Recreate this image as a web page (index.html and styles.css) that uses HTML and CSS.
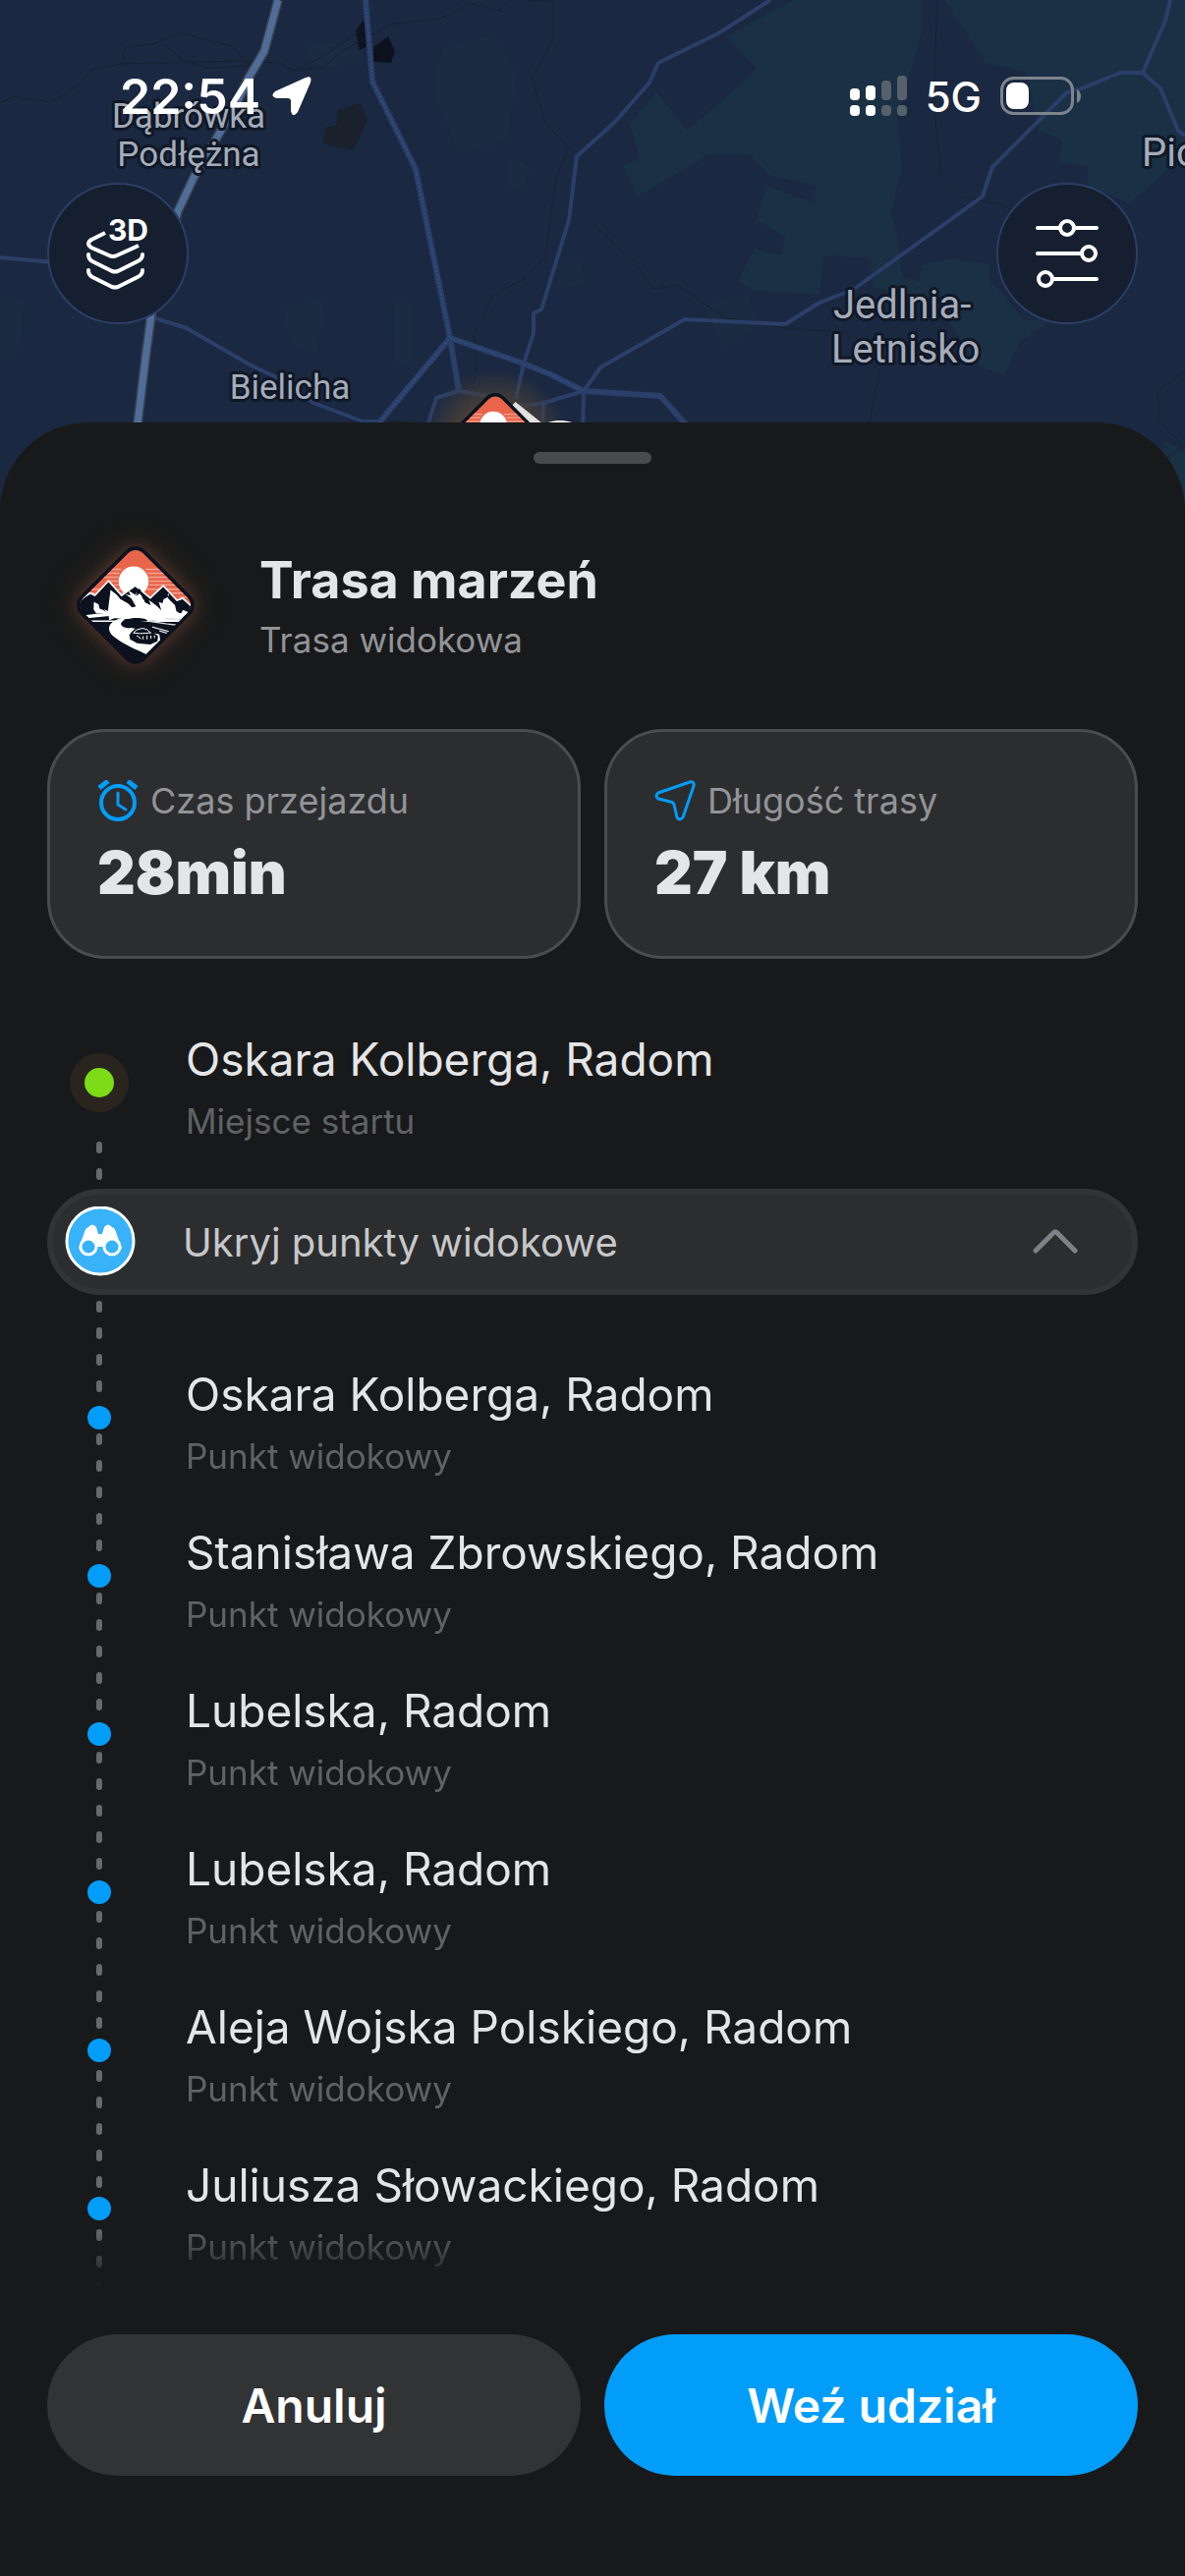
FILE: index.html
```html
<!DOCTYPE html>
<html lang="pl">
<head>
  <meta charset="UTF-8">
  <meta name="viewport" content="width=device-width, initial-scale=1.0">
  <title>Trasa marzeń</title>
  <link rel="stylesheet" href="styles.css">
</head>
<body>
  <svg class="defs" width="0" height="0" aria-hidden="true">
    <defs>
      <clipPath id="badge-clip">
        <rect x="106" y="98" width="258" height="258" rx="32" transform="rotate(45 235 227)"/>
      </clipPath>
      <symbol id="badge" viewBox="54 46 362 362">
        <rect x="95" y="87" width="280" height="280" rx="42" fill="#0b111e" transform="rotate(45 235 227)"/>
        <g clip-path="url(#badge-clip)">
          <path fill="#e8654a" d="M40 40h390v200H40z"/>
          <path stroke="#f3a294" stroke-width="4" d="M150 117h42M265 117h55M135 129h50M272 129h62M130 141h52M275 141h60M150 153h32M278 153h80M170 165h14M276 165h92M60 178h64M180 178h20M270 178h120M60 190h50M190 190h20M345 190h60M60 202h20M370 202h40"/>
          <circle cx="229" cy="154" r="46" fill="#fff"/>
          <path fill="#0b111e" stroke="#fff" stroke-width="5" d="M50 226l28-25 18-11 14 7 42-45 40 45 42-30 46 38 40-38 42 45 18-6 45 40v30H50z"/>
          <path fill="#fff" d="M107 217l14 7 4 14 10 3 15 11H114l-8-12zM158 180l18 14 12 14 24 14 12 12 12-3-14-24-18-14 16 4-8-16 22 14 6-12 18 20 6 16 18 8-6-16 24 18 14 14-8-26 12 4 4-18 16-12-4 14 22 22 4 18 14 10 6-14 18 8 6-10 12 12-6 22-40 6-200-12-16 6-2-14-14-20 12 6z"/>
          <path fill="#0b111e" d="M225 178l14 8-3 13 14-10 8 20 10 4-20-36zM312 186l10 10-2 14 14-8 14 18-24-40zM374 214l10 14-6 16 14-10z"/>
          <path fill="#fff" d="M78 258q150-20 330-4l-60 8q-130-14-262 5z"/>
          <path fill="#fff" d="M284 278c0-22-58-19-90-12-44 10-52 36-24 59 34 26 68 38 101 54l40-42-3-20-92-22c-20-8-26-22-12-26 30-4 80 8 80 9z"/>
          <path fill="#0b111e" d="M272 276c-2-12-48-12-66-5-24 8-21 25 10 27l24-10c-18-7 20-11 32-12z"/>
          <path stroke="#d8dade" stroke-width="4" d="M326 268l50 3M276 276l52 8M328 284l34 4M286 294l52 14M308 306l28 8"/>
          <path fill="#0b111e" d="M216 318q14-24 42-24l28 14 18 14-2 16-22 10-40-4-22-12z"/>
          <path fill="none" stroke="#fff" stroke-width="3" d="M228 312q8-12 28-14 14 0 26 14l-34 2zM238 320l14 10M258 322v10M270 320v12M282 320v10M293 320v8"/>
        </g>
      </symbol>
    </defs>
  </svg>

  <div class="app">
    <svg class="map" viewBox="0 0 1206 540" preserveAspectRatio="xMidYMin slice" aria-hidden="true">
      <defs>
        <radialGradient id="pin-glow">
          <stop offset="0.5" stop-color="#4a4038"/>
          <stop offset="1" stop-color="#4a4038" stop-opacity="0"/>
        </radialGradient>
      </defs>
      <rect width="1206" height="540" fill="#1b2841"/>

      <!-- forests -->
      <g fill="#1a3044">
        <path d="M807 0h131v34l-25 86 5 49-11 48 6 24 5 41 18 4 2-16 30-7 39 6v17l15 14 19 25 27 2-30 21-16 34-27-10-30-45-35-27-42-7-2-31-48-2-4 40-66-4-17-10 17-33 27 7 4-19-29-17 10-35 50 18v-18l-46-10-21-22h-41l-73 43-15-31 17-7-10-35 27-34 31 40 39-33 32-31-32-31z"/>
        <path d="M961 0h245v158l-57 49-42-18v-20l-29-4 2-24-23-7-12-60-42-10z"/>
        <path d="M1184 448l22 12v70h-22z"/>
      </g>
      <g fill="#1a2b42">
        <path d="M310 46l50-4 10 22-48 6zM450 50l50-15 26 40-10 70-50 10-24-60zM520 160l20 10-6 25-16-4zM288 312l42-8-6 56-30-10zM400 304l20 6v60h-18zM0 300l26 6-6 50-20 10zM566 268l26-2 4 24-26 4zM716 310l46-12 8 36-34 20z"/>
      </g>
      <g fill="#0d121e">
        <path d="M362 32l8-12 4 27-8 4zM380 48l15-11 7 15-4 12-18-1z"/>
        <path fill="#1a202c" d="M343 112l24-7 7 17-14 31-31-7 2-16 12-3z"/>
        <path fill="#1a202c" d="M396 428l20 1v8h-20z"/>
      </g>

      <!-- district borders -->
      <g fill="none" stroke="#16202f" stroke-width="1">
        <path d="M0 105l14-7 38 6 28-17 14-16 30-6 4-17 28-3 27-12 52 14 20 20-46 2-22-8-20-15M124 65l116-3 46 2 12 8 32-4 18-16 50-27 50-6 30-16 30 8 10-12 45 2 0 40-22 38 14 46 24 26-13 30-11 80-20 22-34 18-11 26-8 12 4 26-4 24-14 56"/>
        <path d="M954 0l-4 100 8 80 20 20 40 8 30 14M603 228l42 38 20 28 24-4 50 34 60 10 60 4 36 40-10 52"/>
        <path d="M1206 378l-28 20 2 30 24 26-40 30M298 72l30-14 38-26"/>
      </g>

      <!-- roads -->
      <g fill="none" stroke="#2a3f69" stroke-width="4" stroke-linejoin="round">
        <path d="M784 0L731 34 670 64 661 84 626 124 587 159 579 224 551 315 543 319 543 339 533 370 525 406"/>
        <path d="M1191 0L1186 21 1163 74 1181 90 1199 133 1206 138M1163 74H1140L1101 90 1086 94 1010 170 1000 200 868 295 834 308 799 330 697 325 611 374 594 398 593 440"/>
        <path d="M0 262L54 267M158 324L190 334 252 370 281 384 319 410 369 429 386 429M496 403L467 398 444 405 433 440M594 398L550 411 520 414M553 408L552 440"/>
        <path stroke-width="6" d="M372 0L379 83 423 172 458 344 467 398M386 430L458 344 533 370 560 381 594 398 672 403 705 440"/>
        <path stroke="#314d7c" stroke-width="2" stroke-dasharray="2 2" d="M372 0L379 83 423 172 458 344M386 430L458 344 533 370 560 381 594 398"/>
      </g>
      <path fill="none" stroke="#3b4352" stroke-width="10" d="M283 0L269 52 252 81 240 107 198 179 181 215 154 320 148 365 139 440"/>
      <path fill="none" stroke="#4f6d98" stroke-width="7" d="M283 0L269 52 252 81 240 107 198 179 181 215 154 320 148 365 139 440"/>

      <!-- route and its marker -->
      <circle cx="504" cy="452" r="76" fill="url(#pin-glow)"/>
      <path fill="none" stroke="#e2e2e2" stroke-width="8" d="M522 412L552 436"/>
      <ellipse cx="570" cy="440" rx="22" ry="12" fill="#fff"/>
      <use href="#badge" x="449" y="400" width="110" height="110"/>

      <g class="map-labels">
        <text x="192" y="130" text-anchor="middle">Dąbrówka</text>
        <text x="192" y="169" text-anchor="middle">Podłężna</text>
        <text x="295" y="406" text-anchor="middle">Bielicha</text>
        <text class="town" x="848" y="324">Jedlnia-</text>
        <text class="town" x="846" y="369">Letnisko</text>
        <text class="town" x="1162" y="169">Pionki</text>
      </g>
    </svg>

    <header class="top">
      <div class="status">
        <div class="status-left">
          <span class="time">22:54</span>
          <svg width="40" height="40" viewBox="0 0 40 40" aria-hidden="true">
            <path fill="#fff" d="M34 1Q41-2 39 6L26 36q-5 7-7-1V25q0-3-3-3H5q-8-2-2-7z"/>
          </svg>
        </div>
        <div class="status-right">
          <svg width="58" height="42" viewBox="0 0 58 42" aria-hidden="true">
            <g fill="#fff">
              <rect y="13" width="10" height="12" rx="4"/><rect x="16" y="10" width="10" height="15" rx="4"/>
              <rect y="30" width="10" height="11" rx="4"/><rect x="16" y="30" width="10" height="11" rx="4"/>
            </g>
            <g fill="#57616c">
              <rect x="32" y="5" width="10" height="20" rx="4"/><rect x="48" width="10" height="25" rx="4"/>
              <rect x="32" y="30" width="10" height="11" rx="4"/><rect x="48" y="30" width="10" height="11" rx="4"/>
            </g>
          </svg>
          <span class="network">5G</span>
          <svg width="82" height="40" viewBox="0 0 82 40" aria-hidden="true">
            <rect x="1.5" y="1.5" width="72" height="36" rx="12" fill="none" stroke="#7d848d" stroke-width="3"/>
            <rect x="6" y="6" width="23" height="27" rx="8" fill="#fff"/>
            <path fill="#7d848d" d="M78 13q4 2 4 7t-4 7z"/>
          </svg>
        </div>
      </div>
      <div class="map-buttons">
        <button class="round-btn" type="button" aria-label="Warstwy 3D">
          <svg width="72" height="76" viewBox="0 0 72 76">
            <g fill="none" stroke="#fff" stroke-width="4" stroke-linecap="round" stroke-linejoin="round">
              <path stroke-linecap="butt" d="M23 17L9 24q-6 4 0 8l18 8q4 2 8 0l22-10"/>
              <path d="M6 39q0 5 4 7l20 10q3 1 6 0l20-10q5-2 5-7M6 55q0 5 4 7l20 10q3 1 6 0l20-10q5-2 5-7"/>
            </g>
            <text class="label-3d" x="26" y="25">3D</text>
          </svg>
        </button>
        <button class="round-btn" type="button" aria-label="Filtry">
          <svg width="72" height="76" viewBox="0 0 72 76" fill="none" stroke="#fff" stroke-width="4" stroke-linecap="round">
            <path d="M6 12h22M44 12h22M6 38h44M22 64h44"/>
            <circle cx="36" cy="12" r="7"/><circle cx="58" cy="38" r="7"/><circle cx="14" cy="64" r="7"/>
          </svg>
        </button>
      </div>
    </header>

    <main class="sheet">
      <div class="handle"></div>

      <div class="route">
        <svg class="route-badge" width="120" height="120" aria-hidden="true"><use href="#badge"/></svg>
        <div>
          <h1>Trasa marzeń</h1>
          <p>Trasa widokowa</p>
        </div>
      </div>

      <div class="stats">
        <div class="stat">
          <div class="stat-label">
            <svg width="42" height="42" viewBox="0 0 42 42" fill="none" stroke="#029df8" stroke-width="4" aria-hidden="true">
              <circle cx="21" cy="23" r="17"/>
              <path stroke-width="3" stroke-linecap="round" d="M21 13v12l8 5"/>
              <path stroke-width="5" d="M2 8l9-7M31 1l9 7"/>
            </svg>
            Czas przejazdu
          </div>
          <div class="stat-value">28min</div>
        </div>
        <div class="stat">
          <div class="stat-label">
            <svg width="42" height="42" viewBox="0 0 42 42" fill="none" stroke="#029df8" stroke-width="3" stroke-linejoin="round" aria-hidden="true">
              <path d="M36 2q5-1 4 4L29 38q-4 4-6 0L20 25q-1-3-4-3L4 19q-4-3 0-6z"/>
            </svg>
            Długość trasy
          </div>
          <div class="stat-value">27 km</div>
        </div>
      </div>

      <div class="stop start">
        <span class="dot"></span>
        <div>
          <h2>Oskara Kolberga, Radom</h2>
          <p>Miejsce startu</p>
        </div>
        <svg class="rail" width="6" aria-hidden="true"><line x1="3" y1="3" x2="3" y2="40"/></svg>
      </div>

      <button class="toggle" type="button" aria-expanded="true">
        <svg width="72" height="72" viewBox="0 0 72 72" aria-hidden="true">
          <circle cx="36" cy="35" r="34" fill="#38b2f8" stroke="#fff" stroke-width="3"/>
          <path fill="#fff" d="M24 21q4-5 8 0l2 7h4l2-7q4-5 8 0 3 1 4 5l6 17H40v-2h-8v2H14l6-17q1-4 4-5z"/>
          <g fill="#38b2f8" stroke="#fff" stroke-width="3"><circle cx="24" cy="41" r="8"/><circle cx="48" cy="41" r="8"/></g>
        </svg>
        <span>Ukryj punkty widokowe</span>
        <svg width="48" height="28" viewBox="0 0 48 28" fill="none" stroke="#7c8288" stroke-width="5" stroke-linecap="round" stroke-linejoin="round" aria-hidden="true">
          <path d="M4 23L22 5q2-2 4 0l18 18"/>
        </svg>
      </button>

      <div class="stops">
        <svg class="rail" width="6" height="100%" aria-hidden="true"><line x1="3" y1="9" x2="3" y2="100%"/></svg>
        <ul>
          <li class="stop"><span class="dot"></span><div><h2>Oskara Kolberga, Radom</h2><p>Punkt widokowy</p></div></li>
          <li class="stop"><span class="dot"></span><div><h2>Stanisława Zbrowskiego, Radom</h2><p>Punkt widokowy</p></div></li>
          <li class="stop"><span class="dot"></span><div><h2>Lubelska, Radom</h2><p>Punkt widokowy</p></div></li>
          <li class="stop"><span class="dot"></span><div><h2>Lubelska, Radom</h2><p>Punkt widokowy</p></div></li>
          <li class="stop"><span class="dot"></span><div><h2>Aleja Wojska Polskiego, Radom</h2><p>Punkt widokowy</p></div></li>
          <li class="stop"><span class="dot"></span><div><h2>Juliusza Słowackiego, Radom</h2><p>Punkt widokowy</p></div></li>
        </ul>
      </div>

      <div class="actions">
        <button class="btn" type="button">Anuluj</button>
        <button class="btn primary" type="button">Weź udział</button>
      </div>
    </main>
  </div>
</body>
</html>
```

FILE: styles.css
```css
* { box-sizing: border-box; }
body {
  margin: 0;
  background: #18191a;
  color: #e4e5e7;
  font-family: Inter, "Noto Sans", sans-serif;
}
h1, h2, p, ul { margin: 0; padding: 0; }
ul { list-style: none; }
button { font-family: inherit; border: 0; cursor: pointer; }
svg { display: block; flex-shrink: 0; }
.defs { position: absolute; }

.app {
  position: relative;
  min-height: 100vh;
  display: flex;
  flex-direction: column;
}

/* map */
.map {
  position: absolute;
  top: 0;
  left: 0;
  width: 100%;
  height: 540px;
}
.map-labels {
  font-family: Roboto, sans-serif;
  font-size: 35px;
  fill: #a5acb9;
  stroke: #101827;
  stroke-width: 6px;
  stroke-linejoin: round;
  paint-order: stroke;
}
.map-labels .town { font-size: 40px; }

.top {
  position: relative;
  height: 430px;
  padding: 68px 48px 0;
}
.status {
  display: flex;
  justify-content: space-between;
  align-items: center;
  height: 60px;
  padding: 0 58px 0 74px;
  color: #fff;
}
.status-left, .status-right { display: flex; align-items: center; }
.status-left { gap: 12px; }
.status-right { gap: 19px; }
.time { font-size: 50px; font-weight: 600; }
.network { font-size: 42px; font-weight: 500; }

.map-buttons {
  display: flex;
  justify-content: space-between;
  margin-top: 58px;
}
.round-btn {
  display: flex;
  align-items: center;
  justify-content: center;
  width: 144px;
  height: 144px;
  padding: 0;
  border: 2px solid #2a3f66;
  border-radius: 50%;
  background: #161f2f;
}
.round-btn svg { overflow: visible; }
.label-3d { font-size: 30px; font-weight: 700; fill: #fff; }

/* sheet */
.sheet {
  position: relative;
  flex: 1;
  display: flex;
  flex-direction: column;
  padding: 30px 48px 102px;
  background: #18191a;
  border-radius: 90px 90px 0 0;
}
.handle {
  align-self: center;
  width: 120px;
  height: 12px;
  border-radius: 6px;
  background: #484a4c;
}

.route {
  display: flex;
  align-items: center;
  gap: 66px;
  height: 144px;
  margin-top: 72px;
  padding-left: 30px;
}
.route-badge {
  overflow: visible;
  filter: drop-shadow(0 0 8px rgba(232, 101, 74, 0.25)) drop-shadow(0 0 16px rgba(150, 110, 60, 0.25));
}
.route h1 { font-size: 52px; line-height: 64px; font-weight: 700; }
.route p { font-size: 35px; line-height: 44px; margin-top: 6px; color: #929499; }

.stats {
  display: grid;
  grid-template-columns: 1fr 1fr;
  gap: 24px;
  margin-top: 54px;
}
.stat {
  height: 234px;
  padding: 45px 48px;
  border: 3px solid #4a4c4e;
  border-radius: 60px;
  background: #2c2d2f;
}
.stat-label {
  display: flex;
  align-items: center;
  gap: 12px;
  font-size: 36px;
  line-height: 50px;
  color: #929499;
}
.stat-value { font-size: 60px; line-height: 72px; font-weight: 900; margin-top: 12px; }

/* stops */
.stop {
  display: grid;
  grid-template-columns: 30px 1fr;
  column-gap: 73px;
  padding-left: 38px;
}
.stop h2 { font-size: 46px; line-height: 60px; font-weight: 400; }
.stop p { font-size: 35px; line-height: 42px; margin-top: 12px; color: #5f6266; }
.dot {
  justify-self: center;
  width: 24px;
  height: 24px;
  margin-top: 42px;
  border-radius: 50%;
  background: #029df8;
}
.start { margin-top: 72px; }
.start .dot {
  width: 30px;
  height: 30px;
  margin-top: 39px;
  background: #7bdc17;
  box-shadow: 0 0 0 15px #2a241f;
}
.rail line {
  stroke: #66696e;
  stroke-width: 6px;
  stroke-linecap: round;
  stroke-dasharray: 6 21;
}
.start .rail { justify-self: center; height: 48px; }

.toggle {
  display: flex;
  align-items: center;
  gap: 48px;
  height: 108px;
  padding: 0 54px 0 12px;
  border: 6px solid #323335;
  border-radius: 54px;
  background: #2c2d2f;
  color: #c6c8ca;
  font-size: 40px;
  text-align: left;
}
.toggle span { flex: 1; }

.stops {
  position: relative;
  flex: 1;
  padding: 71px 0 20px;
  -webkit-mask-image: linear-gradient(to top, transparent, #000 60px);
  mask-image: linear-gradient(to top, transparent, #000 60px);
}
.stops .rail { position: absolute; top: 0; left: 50px; }
.stops ul {
  position: relative;
  display: grid;
  gap: 47px;
}

.actions {
  display: grid;
  grid-template-columns: 1fr 1fr;
  gap: 24px;
  margin-top: 48px;
}
.btn {
  height: 144px;
  border-radius: 72px;
  background: #323335;
  color: #fff;
  font-size: 48px;
  font-weight: 600;
}
.btn.primary { background: #029df8; }
```
